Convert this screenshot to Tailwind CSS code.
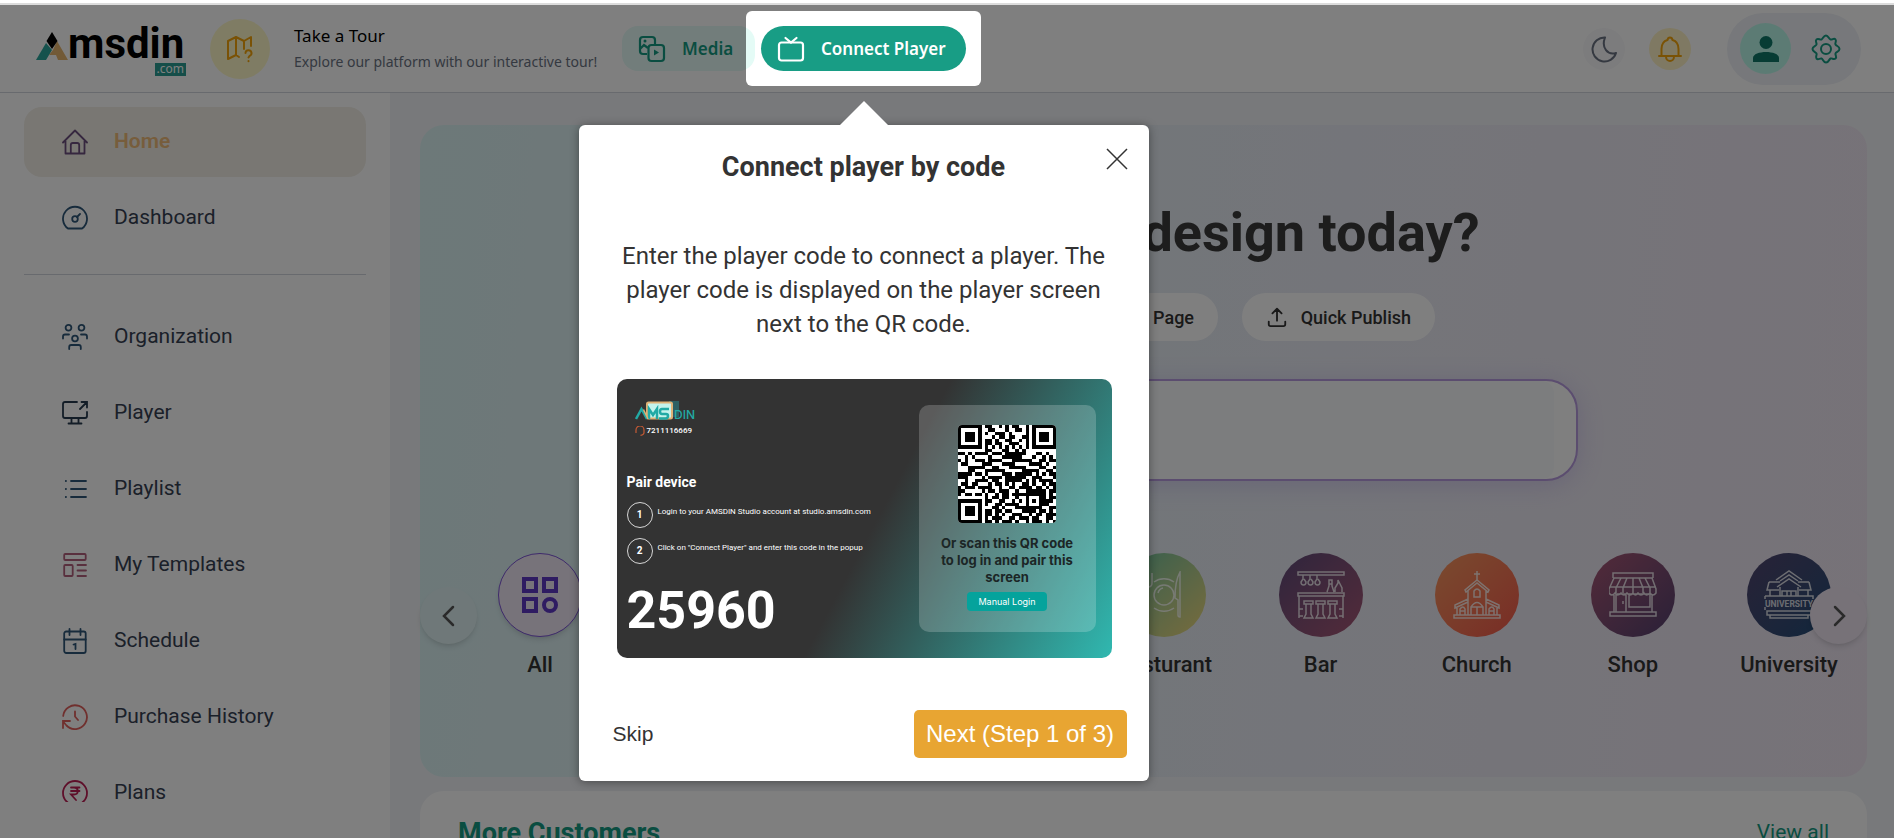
<!DOCTYPE html>
<html lang="en">
  <head>
    <meta charset="UTF-8" />
    <meta name="viewport" content="width=device-width, initial-scale=1.0" />
    <title>Amsdin Studio</title>
    <script src="https://cdn.jsdelivr.net/npm/@tailwindcss/browser@4"></script>
  </head>
  <body class="h-screen overflow-hidden flex flex-col bg-[#f1f3f6] font-['Roboto',sans-serif] text-gray-700">
    <div class="relative z-50 h-[5px] shrink-0 bg-white border-b-2 border-[#dcdcdc]"></div>

    <!-- Header -->
    <header class="relative z-40 h-[88px] shrink-0 flex items-center bg-white border-b border-gray-300 pl-9 pr-[33px]">
      <a href="#" aria-label="Amsdin.com" class="relative flex items-start w-[150px] h-[54px] text-black">
        <svg class="w-8 h-7 mt-[10px] shrink-0" viewBox="0 0 32 28">
          <path d="M10 11 16 18 10 28H0z" fill="#2aa59b" />
          <path d="M21 9 32 28H22L20 23H13L17 18z" fill="#e5b56f" />
          <path d="M16 0 21.500 9 16 17 10.500 9z" fill="#000" />
        </svg>
        <span class="text-[42px] leading-[44px] font-bold">msdin</span>
        <span class="absolute right-0 bottom-0 h-[13px] px-0.5 bg-[#2a9d93] text-white text-[12px] leading-[11px] font-['Noto_Sans',sans-serif]">.com</span>
      </a>

      <a href="#" class="flex items-center gap-6 ml-6 font-['Noto_Sans',sans-serif]">
        <span class="size-[60px] rounded-full bg-[#fef9c9] flex items-center justify-center text-[#f5a50b]">
          <svg class="size-7" viewBox="0 0 28 28" fill="none" stroke="currentColor" stroke-width="2" stroke-linejoin="round" stroke-linecap="round">
            <path d="M13 22l-3-2-8 4V6l8-4 8 4 7-4v9M10 2v18M18 6v8" />
            <path d="M19.500 18a3 3 0 1 1 4 3l-1 1.500M22.500 26v.2" />
          </svg>
        </span>
        <span class="block w-[304px] whitespace-nowrap">
          <span class="block text-[17px] leading-[26px] text-black">Take a Tour</span>
          <span class="block text-[14px] leading-[26px] text-gray-500">Explore our platform with our interactive tour!</span>
        </span>
      </a>

      <button class="ml-6 h-[45px] w-[133px] shrink-0 rounded-2xl bg-[#e4fbf6] pl-4 flex items-center gap-4 text-[#159b82] text-[17px] font-semibold font-['Noto_Sans',sans-serif]">
        <svg class="size-7" viewBox="0 0 28 28" fill="none" stroke="currentColor" stroke-width="2.200">
          <path d="M9 19H5a3 3 0 0 1-3-3V5a3 3 0 0 1 3-3h9a3 3 0 0 1 3 3v4M2 14l4-4 4 3" />
          <rect x="10.500" y="10" width="15.500" height="16" rx="3" />
          <path d="M16 14.500v6l5-3z" fill="currentColor" stroke="none" />
          <circle cx="7" cy="6" r="1.500" fill="currentColor" stroke="none" />
        </svg>
        Media
      </button>

      <div class="relative ml-[6px] shrink-0">
        <button class="h-[45px] w-[205px] rounded-full bg-[#189d85] pl-4 flex items-center gap-4 text-white text-[17px] font-semibold font-['Noto_Sans',sans-serif]">
          <svg class="size-7" viewBox="0 0 28 28" fill="none" stroke="currentColor" stroke-width="2.200" stroke-linecap="round">
            <rect x="2" y="7.500" width="24" height="18" rx="2.500" />
            <path d="M8.500 3 14 7.500 19.500 3" />
          </svg>
          Connect Player
        </button>

        <!-- Tour spotlight: the huge shadow dims the rest of the page -->
        <div class="absolute -inset-[15px] rounded-md pointer-events-none shadow-[0_0_0_9999px_rgba(0,0,0,0.5)]"></div>

        <!-- Tour popover -->
        <div role="dialog" aria-labelledby="tour-title" class="absolute top-[99px] left-1/2 -translate-x-1/2 w-[570px] rounded-md bg-white text-[#333] shadow-[0_1px_10px_rgba(0,0,0,0.4)] pl-[34px] pr-[22px] pb-[23px]">
          <svg class="absolute -top-6 left-1/2 -translate-x-1/2 w-12 h-6" viewBox="0 0 48 24"><path d="M24 0 48 24H0z" fill="#fff" /></svg>
          <button aria-label="Close" class="absolute right-5 top-[22px]">
            <svg class="size-6" viewBox="0 0 24 24" stroke="#333" stroke-width="1.500"><path d="M2 2l20 20M22 2 2 22" /></svg>
          </button>
          <h2 id="tour-title" class="pt-6 text-[27px] leading-9 font-bold text-center pr-3">Connect player by code</h2>
          <p class="mt-[54px] text-[24px] leading-[34px] text-center pr-3">
            Enter the player code to connect a player. The<br />player code is displayed on the player screen<br />next to the QR code.
          </p>

          <div class="mt-[38px] ml-1 mr-[15px] h-[279px] rounded-[10px] flex justify-between bg-[linear-gradient(118deg,#333_52%,#30b8b0_100%)] text-white">
            <div class="pl-[10px] pt-[22px]">
              <div class="pl-2">
                <svg class="w-[62px] h-5" viewBox="0 0 62 20">
                  <path d="M34 0h10v16H34z" fill="#2d5f63" />
                  <rect x="12" y="1.500" width="25" height="16" rx="1.500" fill="#c4f3ec" stroke="#dfb176" stroke-width="2" />
                  <path d="M1 18 6.500 8 12 18M14 18V8l4 6 4-6v10M34 8h-7q-2 0-2 2.500t2 2.500h4q2 0 2 2t-2 2.500h-7" fill="none" stroke="#22aaa5" stroke-width="2.500" />
                  <path d="M8.500 8.500 13 18" stroke="#dfb176" stroke-width="1.500" />
                  <text x="39" y="18" font-family="Inter, sans-serif" font-size="12" font-weight="500" fill="#22aaa5">DIN</text>
                </svg>
                <div class="mt-1 flex items-center gap-[2px] text-[8px] leading-3 font-medium">
                  <svg class="size-[10px]" viewBox="0 0 10 10" fill="none" stroke="#c55a35" stroke-width="1.200"><path d="M1 6V4a4 4 0 0 1 8 0v2.500Q9 9 5.500 9.300M1 4v3M9 4v3" /></svg>
                  7211116669
                </div>
              </div>
              <h3 class="mt-[35px] text-[14px] leading-5 font-bold">Pair device</h3>
              <ol class="mt-[10px] flex flex-col gap-[10px] text-[8px] leading-5 whitespace-nowrap">
                <li class="flex gap-[5px]"><span class="size-[26px] rounded-full border border-white/80 flex items-center justify-center text-[10px] font-bold">1</span>Login to your AMSDIN Studio account at studio.amsdin.com</li>
                <li class="flex gap-[5px]"><span class="size-[26px] rounded-full border border-white/80 flex items-center justify-center text-[10px] font-bold">2</span>Click on "Connect Player" and enter this code in the popup</li>
              </ol>
              <p class="mt-[17px] text-[52px] leading-[60px] font-bold">25960</p>
            </div>
            <div class="w-[177px] my-[26px] mr-4 rounded-[10px] bg-white/20 flex flex-col items-center pt-5 text-[#1c2626]">
              <svg id="qr" class="size-[98px] rounded-sm bg-white" viewBox="0 0 29 29" shape-rendering="crispEdges"></svg>
              <p class="mt-3 text-[13px] leading-[17px] font-bold text-center font-['Inter',sans-serif]">Or scan this QR code<br />to log in and pair this<br />screen</p>
              <button class="mt-[6px] h-[19px] w-20 rounded-[4px] bg-[#05a39c] text-white text-[9px] font-['Inter',sans-serif]">Manual Login</button>
            </div>
          </div>

          <div class="mt-[52px] flex items-center justify-between font-['Liberation_Sans',sans-serif]">
            <button class="text-[21px]">Skip</button>
            <button class="h-12 w-[213px] rounded-[5px] bg-[#e8a532] text-white text-[24px]">Next (Step 1 of 3)</button>
          </div>
        </div>
      </div>

      <div class="ml-auto flex items-center">
        <button aria-label="Dark mode" class="size-[42px] rounded-full bg-gray-100/60 text-gray-500 flex items-center justify-center">
          <svg class="size-7" viewBox="0 0 28 28" fill="none" stroke="currentColor" stroke-width="2" stroke-linejoin="round"><path d="M15 2.500A12 12 0 1 0 26 18C18 20.500 11 13 15 2.500z" /></svg>
        </button>
        <button aria-label="Notifications" class="ml-6 size-[42px] rounded-full bg-amber-100 text-[#f5a50b] flex items-center justify-center">
          <svg class="size-7" viewBox="0 0 28 28" fill="none" stroke="currentColor" stroke-width="2" stroke-linejoin="round" stroke-linecap="round">
            <path d="M3 21h22M5.500 20.500V14c0-5 2.500-8 6-9 .5-3.500 4.500-3.500 5 0 3.500 1 6 4 6 9v6.500M10 21.500c0 6 8 6 8 0" />
          </svg>
        </button>
        <div class="ml-9 h-[72px] w-[134px] rounded-full bg-[#eef1f6] pl-[13px] pr-5 flex items-center justify-between">
          <button aria-label="Account" class="size-[51px] rounded-full bg-[#b9f7e9] text-[#0f7969] flex items-center justify-center">
            <svg class="size-7" viewBox="0 0 28 28" fill="currentColor"><circle cx="14" cy="7.500" r="6.500" /><path d="M1 27v-4c0-8 26-8 26 0v4z" /></svg>
          </button>
          <button aria-label="Settings" class="text-[#159b82]">
            <svg class="size-[30px]" viewBox="0 0 30 30" fill="none" stroke="currentColor" stroke-width="2" stroke-linejoin="round">
              <path d="M15 1.500C17.500 1.500 17.500 5 19.500 5.500S23 3.500 24.500 5.500 23.500 8.800 24.500 10.500 28.500 12.300 28.500 15 25 17.800 24.500 19.500 26.300 23 24.500 24.500 21 23.800 19.500 24.500 17.800 28.500 15 28.500 12.200 25 10.500 24.500 7 26.300 5.500 24.500 6.300 21 5.500 19.500 1.500 17.700 1.500 15 5 12.200 5.500 10.500 3.700 7 5.500 5.500 9 6.200 10.500 5.500 12.500 1.500 15 1.500z" />
              <circle cx="15" cy="15" r="5" />
            </svg>
          </button>
        </div>
      </div>
    </header>

    <div class="flex flex-1 min-h-0">
      <!-- Sidebar -->
      <aside class="w-[390px] shrink-0 bg-white px-6 pt-[14px] pb-9 flex">
        <nav class="flex-1 overflow-hidden flex flex-col gap-[6px] text-[21px]">
          <a href="#" class="h-[70px] shrink-0 rounded-[18px] bg-[#f2efe6] px-[38px] flex items-center gap-[26px] font-semibold text-[#eebb78]">
            <svg class="size-[26px] text-[#6d4f7e]" viewBox="0 0 26 26" fill="none" stroke="currentColor" stroke-width="1.800" stroke-linejoin="round" stroke-linecap="round"><path d="M1 13.500 13 1.500l12 12M3.500 12v12.500h19V12M8.800 24.500V16q0-2 2-2h4.400q2 0 2 2v8.500" /></svg>
            Home
          </a>
          <a href="#" class="h-[70px] shrink-0 px-[38px] flex items-center gap-[26px]">
            <svg class="size-[26px] text-[#2f5778]" viewBox="0 0 26 26" fill="none" stroke="currentColor" stroke-width="1.800" stroke-linejoin="round" stroke-linecap="round"><path d="M6 23.500a12 12 0 1 1 14 0zM15 12l3-3" /><circle cx="13" cy="14" r="2.800" /></svg>
            Dashboard
          </a>
          <hr class="mt-[15px] mb-[21px] border-gray-300" />
          <a href="#" class="h-[70px] shrink-0 px-[38px] flex items-center gap-[26px]">
            <svg class="size-[26px] text-[#2f5778]" viewBox="0 0 26 26" fill="none" stroke="currentColor" stroke-width="1.800" stroke-linecap="round"><circle cx="6.500" cy="3.800" r="2.900" /><circle cx="19.500" cy="3.800" r="2.900" /><circle cx="13" cy="14.500" r="2.900" /><path d="M1 14.500v-2q0-2 2-2h4M25 14.500v-2q0-2-2-2h-4M7.200 25v-2q0-2 2-2h7.600q2 0 2 2v2" /></svg>
            Organization
          </a>
          <a href="#" class="h-[70px] shrink-0 px-[38px] flex items-center gap-[26px]">
            <svg class="size-[26px] text-[#263b4f]" viewBox="0 0 26 26" fill="none" stroke="currentColor" stroke-width="1.800" stroke-linecap="round"><path d="M15 2H3Q1 2 1 4v12q0 2 2 2h20q2 0 2-2v-4M18 9l7-7M19.500 2H25v5.500M9.500 18v5M16.500 18v5M6.500 23.500h13" /></svg>
            Player
          </a>
          <a href="#" class="h-[70px] shrink-0 px-[38px] flex items-center gap-[26px]">
            <svg class="size-[26px] text-[#2f5778]" viewBox="0 0 26 26" fill="none" stroke="currentColor" stroke-width="1.800" stroke-linecap="round"><path d="M9 5h15M9 13h15M9 21h15M3.800 5h.2M3.800 13h.2M3.800 21h.2" /></svg>
            Playlist
          </a>
          <a href="#" class="h-[70px] shrink-0 px-[38px] flex items-center gap-[26px]">
            <svg class="size-[26px] text-[#b2607c]" viewBox="0 0 26 26" fill="none" stroke="currentColor" stroke-width="1.800" stroke-linecap="round"><rect x="2.200" y="2" width="21.500" height="6" rx="1" /><rect x="2.200" y="13" width="8.500" height="11" rx="1" /><path d="M15.500 13h8.500M15.500 18.500h8.500M15.500 24h8.500" /></svg>
            My Templates
          </a>
          <a href="#" class="h-[70px] shrink-0 px-[38px] flex items-center gap-[26px]">
            <svg class="size-[26px] text-[#2f5778]" viewBox="0 0 26 26" fill="none" stroke="currentColor" stroke-width="1.800" stroke-linecap="round"><rect x="2.200" y="3.500" width="21.500" height="21.500" rx="2" /><path d="M2.200 11.500h21.500M7.500 1v6M18.500 1v6M11.500 16.500l2-.5v5" /></svg>
            Schedule
          </a>
          <a href="#" class="h-[70px] shrink-0 px-[38px] flex items-center gap-[26px]">
            <svg class="size-[26px] text-[#e0605c]" viewBox="0 0 26 26" fill="none" stroke="currentColor" stroke-width="1.800" stroke-linecap="round"><path d="M1.200 12A11.900 11.900 0 1 1 4.500 21.500L1.500 18M1 24v-7h7M13 7.500v5l3 3.500" /></svg>
            Purchase History
          </a>
          <a href="#" class="h-[70px] shrink-0 px-[38px] flex items-center gap-[26px]">
            <svg class="size-[26px] text-[#bd1f55]" viewBox="0 0 26 26" fill="none" stroke="currentColor" stroke-width="1.800" stroke-linecap="round"><circle cx="13" cy="13" r="12" /><path d="M9 7.500h8.500M9 11h8.500M9 7.500h3c5 0 5 7 0 7H9l5 5.500" /></svg>
            Plans
          </a>
        </nav>
      </aside>

      <!-- Content -->
      <main class="flex-1 min-w-0 overflow-hidden pt-8 pl-[30px] pr-[27px]">
        <section class="relative rounded-3xl pt-20 pb-24 bg-[linear-gradient(95deg,#daf2f3_0%,#e4edf3_40%,#e9ebf4_62%,#eee5f1_100%)]">
          <h1 class="text-center text-[54px] leading-[56px] font-bold text-[#3a3a3a]">What will you design today?</h1>
          <div class="mt-8 flex justify-center gap-6 text-[18px] font-medium text-[#333]">
            <button class="h-12 w-[152px] rounded-full bg-white">Design</button>
            <button class="h-12 w-[190px] rounded-full bg-white pr-6 text-right">Landing Page</button>
            <button class="h-12 w-[193px] rounded-full bg-white px-6 flex items-center justify-between">
              <svg class="size-[22px]" viewBox="0 0 24 24" fill="none" stroke="currentColor" stroke-width="2" stroke-linecap="round" stroke-linejoin="round"><path d="M12 16V3M7 8l5-5 5 5M3 17v3q0 2 2 2h14q2 0 2-2v-3" /></svg>
              Quick Publish
            </button>
          </div>
          <div class="mt-[38px] mx-auto w-3/5 h-[102px] rounded-[32px] border-2 border-[#b79ade] bg-white px-[22px] shadow-[0_4px_24px_rgba(140,110,220,0.25)]">
            <input type="text" aria-label="Search designs" class="block size-full rounded-r-xl bg-[#f9fbfd] outline-none" />
          </div>

          <div class="mt-[72px] pl-[42px] grid grid-cols-9 text-center text-[22px] leading-8 font-medium text-[#333]">
            <a href="#" class="flex flex-col items-center gap-3">
              <span class="size-[84px] rounded-full border border-[#7d54d6] bg-[#efe6f5] shadow-md flex items-center justify-center">
                <svg class="size-9" viewBox="0 0 36 36" fill="none" stroke="#5f38c4" stroke-width="4"><rect x="2" y="2" width="12" height="12" /><rect x="22" y="2" width="12" height="12" /><rect x="2" y="22" width="12" height="12" /><circle cx="28" cy="28" r="6" /></svg>
              </span>
              All
            </a>
            <a href="#" class="flex flex-col items-center gap-3"><span class="size-[84px] rounded-full bg-sky-300"></span>Cafe</a>
            <a href="#" class="flex flex-col items-center gap-3"><span class="size-[84px] rounded-full bg-rose-300"></span>Gym</a>
            <a href="#" class="flex flex-col items-center gap-3"><span class="size-[84px] rounded-full bg-indigo-300"></span>Hotel</a>
            <a href="#" class="flex flex-col items-center gap-3">
              <span class="size-[84px] rounded-full bg-linear-to-br from-[#5fbd9c] to-[#f0d878] flex items-center justify-center">
                <svg class="size-12" viewBox="0 0 48 48" fill="none" stroke="#fff" stroke-opacity=".8" stroke-width="1.500"><circle cx="24" cy="24" r="10" /><path d="M14 11a17 17 0 0 1 20 0M14 37a17 17 0 0 0 20 0M18 22q1-4 5-5M40 46V1q-5 9-5 26l3 2v15q0 2 2 2zM4 2v10q0 4 4 4t4-4V2M8 2v44" /></svg>
              </span>
              Resturant
            </a>
            <a href="#" class="flex flex-col items-center gap-3">
              <span class="size-[84px] rounded-full bg-linear-to-br from-[#5f4a7a] to-[#a85674] flex items-center justify-center">
                <svg class="size-12" viewBox="0 0 48 48" fill="none" stroke="#fff" stroke-opacity=".8" stroke-width="1.500"><path d="M1 1h46v3H1zM6 4v4l-2 3q0 3 2.500 3T9 11L7 8M13 4v4l-2 3q0 3 2.500 3t2.500-3l-2-3M20 4v4l-2 3q0 3 2.500 3t2.500-3l-2-3M30 21l2-6V9h3v6l2 6M32 13h3M38 21v-4l3-5V9l4 8v4M1 22h46v3H1zM2 25v22M46 25v22M7 30h9v3H7zM19 30h9v3h-9zM31 30h9v3h-9zM9 33v10l-2 4h9l-2-4V33M21 33v10l-2 4h9l-2-4V33M33 33v10l-2 4h9l-2-4V33M2 38h4M42 38h4M2 45h4M42 45h4" /></svg>
              </span>
              Bar
            </a>
            <a href="#" class="flex flex-col items-center gap-3">
              <span class="size-[84px] rounded-full bg-linear-to-br from-[#f5965f] to-[#f2574b] flex items-center justify-center">
                <svg class="size-12" viewBox="0 0 48 48" fill="none" stroke="#fff" stroke-opacity=".8" stroke-width="1.500"><path d="M24 0v10M21 3h6M24 9 12 19l1 2 11-9 11 9 1-2zM15 19v25M33 19v25M15 28 2 34v3l13-6M33 28l13 6v3l-13-6M1 44h46v3H1zM4 37v7M44 37v7M21 26v-6q3-4 6 0v6zM18 44V36q6-9 12 0v8M18 36h12M24 36v8M7 44v-6q3-4 5 0v6M36 44v-6q3-4 5 0v6M7 40h5M36 40h5" /></svg>
              </span>
              Church
            </a>
            <a href="#" class="flex flex-col items-center gap-3">
              <span class="size-[84px] rounded-full bg-linear-to-br from-[#a85674] to-[#54406f] flex items-center justify-center">
                <svg class="size-12" viewBox="0 0 48 48" fill="none" stroke="#fff" stroke-opacity=".8" stroke-width="1.500"><path d="M4 7V2h40v5M5 7h38l4 11v4q-3 4-6 0-4 4-6 0-3 4-6 0-3 4-5 0-3 4-6 0-3 4-6 0-4 4-6 0-3 4-6 0v-4zM1 16h46M12 7 7 17v5M18 7l-4 10v5M24 7v15M30 7l4 10v5M36 7l5 10v5M5 24v17M43 24v17M7 41V23h10v18M20 23h21v13H20zM14 30v3M1 41h46v4H1z" /></svg>
              </span>
              Shop
            </a>
            <a href="#" class="flex flex-col items-center gap-3">
              <span class="size-[84px] rounded-full bg-linear-to-br from-[#50456e] to-[#1e4d78] flex items-center justify-center">
                <svg class="size-[50px]" viewBox="0 0 50 50" fill="none" stroke="#fff" stroke-opacity=".8" stroke-width="1.500"><path d="M12 10 25 1l13 9M16 11l9-6 9 6M13 17l12-8 12 8M16 17v9M34 17v9M5 12h11M34 12h11M5 12l-2 8h12M45 12l2 8H35M6 20v6M44 20v6M18 26v-5h14v5M23 21v5M27 21v5M1 26h48v3M1 29v-3M3 41h44v4H3zM6 45h38v3H6zM1 37v3M49 37v3" /><text x="25" y="37" text-anchor="middle" font-family="Roboto, sans-serif" font-size="8.500" font-weight="700" fill="#fff" fill-opacity=".8" stroke="none">UNIVERSITY</text></svg>
              </span>
              University
            </a>
          </div>

          <button aria-label="Previous" class="absolute left-0 top-[462px] size-[57px] rounded-full bg-[#dff1f2] shadow-md flex items-center justify-center">
            <svg class="size-6" viewBox="0 0 24 24" fill="none" stroke="#555" stroke-width="2.500" stroke-linecap="round"><path d="M16 3 7 12l9 9" /></svg>
          </button>
          <button aria-label="Next" class="absolute right-0 top-[462px] size-[57px] rounded-full bg-[#eee5f1] shadow-md flex items-center justify-center">
            <svg class="size-6" viewBox="0 0 24 24" fill="none" stroke="#555" stroke-width="2.500" stroke-linecap="round"><path d="M8 3l9 9-9 9" /></svg>
          </button>
        </section>

        <section class="mt-[14px] rounded-3xl bg-white px-[38px] pt-6 pb-10 flex items-center justify-between text-[#159b82]">
          <h2 class="text-[27px] leading-9 font-bold">More Customers</h2>
          <a href="#" class="text-[21px]">View all</a>
        </section>
      </main>
    </div>

    <script>
      // Pairing QR code, one string per row
      const rows = [
        "11111110110010101100101111111",
        "10000010011000100110101000001",
        "10111010100111010000101011101",
        "10111010001011011001101011101",
        "10111010110100110010101011101",
        "10000010110110011100101000001",
        "11111110101010101010101111111",
        "00000000110001100101000000000",
        "11010111101110111111000110100",
        "00101000010001111110001001010",
        "10100111011110001111110011011",
        "01100001110001111000011110100",
        "00011111001100011111000011001",
        "00011000111111000001111100110",
        "11110110100001110111110101011",
        "11100001011110111111001110001",
        "00100111101100111110101011110",
        "01101100010110101001101001011",
        "10111011110010011011110110101",
        "11000001011011100100111111011",
        "10110110100101101111111111010",
        "00000000101101100100100011011",
        "11111110110011001010101011110",
        "10000010100110111100100011100",
        "10111010001101000111111110011",
        "10111010110110110001111011010",
        "10111010110101001110010110111",
        "10000010101110011011101100110",
        "11111110110101110100101110101",
      ];
      const d = rows
        .map((row, y) => [...row].map((c, x) => (c === "1" ? `M${x} ${y}h1v1h-1z` : "")).join(""))
        .join("");
      document.getElementById("qr").innerHTML = `<path d="${d}" fill="#000" />`;
    </script>
  </body>
</html>
